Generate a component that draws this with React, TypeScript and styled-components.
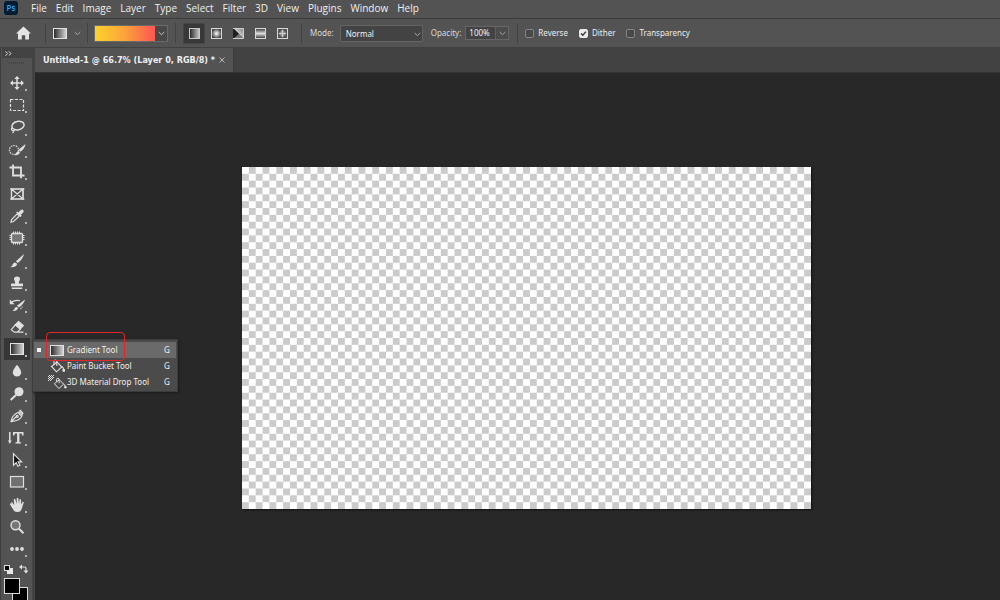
import React from 'react';
import styled, { createGlobalStyle, css } from 'styled-components';

const GlobalStyle = createGlobalStyle`
  *, *::before, *::after { box-sizing: border-box; }
  body {
    margin: 0;
    background: #282828;
    color: #dcdcdc;
    font-family: 'Noto Sans', 'Open Sans', sans-serif;
    font-size: 8px;
    line-height: 12px;
  }
  button, input, select { font: inherit; color: inherit; margin: 0; padding: 0; border: 0; background: none; }
  svg { display: block; flex: none; }
`;

const AppShell = styled.div`
  display: flex;
  flex-direction: column;
  height: 100vh;
  overflow: hidden;
`;

const MenuBar = styled.nav`
  display: flex;
  align-items: center;
  flex: none;
  height: 19px;
  padding: 0 0 2px 4px;
  gap: 13px;
  background: #535353;
  border-bottom: 1px solid #3c3c3c;
`;

const MenuList = styled.div`
  display: flex;
  gap: 9px;
`;

const MenuButton = styled.button`
  font-family: 'Open Sans', 'Noto Sans', sans-serif;
  font-size: 10px;
  line-height: 14px;
  color: #f0f0f0;
`;

const OptionsBar = styled.div`
  display: flex;
  align-items: center;
  flex: none;
  height: 29px;
  background: #535353;
  border-bottom: 1px solid #404040;
`;

const Divider = styled.div<{ $before?: number; $after?: number }>`
  width: 1px;
  height: 20px;
  margin-left: ${p => p.$before ?? 8}px;
  margin-right: ${p => p.$after ?? 8}px;
  background: #434343;
`;

const HomeButton = styled.button`
  margin-left: 16px;
`;

const ToolPreset = styled.button`
  display: flex;
  align-items: center;
  gap: 7px;
`;

const GradientPicker = styled.button`
  display: flex;
  height: 17px;
  border: 1px solid #6a6a6a;
  background: #484848;
`;

const GradientSwatch = styled.span`
  width: 60px;
  height: 100%;
  background: linear-gradient(90deg, #fdd32a, #fba33b 50%, #fc5c50 95%);
`;

const ChevronCell = styled.span`
  display: flex;
  align-items: center;
  justify-content: center;
  width: 12px;
  height: 100%;
`;

const StyleGroup = styled.div`
  display: flex;
`;

const StyleButton = styled.button<{ $active?: boolean }>`
  display: flex;
  align-items: center;
  justify-content: center;
  width: 22px;
  height: 21px;
  border: 1px solid ${p => (p.$active ? '#454545' : 'transparent')};
  background: ${p => (p.$active ? '#383838' : 'none')};
`;

const FieldLabel = styled.label`
  color: #dadada;
`;

const ModeBox = styled.div`
  position: relative;
  width: 83px;
  margin: 1px 8px 0 6px;
`;

const ModeSelect = styled.select`
  appearance: none;
  display: block;
  width: 100%;
  height: 17px;
  padding: 0 16px 0 5px;
  border: 1px solid #646464;
  border-radius: 2px;
  background: #434343;
  color: #f2f2f2;
`;

const SelectArrow = styled.span`
  position: absolute;
  right: 2px;
  top: 7px;
  pointer-events: none;
`;

const OpacityBox = styled.div`
  display: flex;
  height: 14px;
  margin-left: 4px;
  border: 1px solid #666;
  background: #434343;
`;

const OpacityInput = styled.input`
  width: 29px;
  padding-left: 3px;
  color: #f4f4f4;
`;

const ArrowButton = styled.button`
  display: flex;
  align-items: center;
  justify-content: center;
  width: 13px;
  border-left: 1px solid #606060;
  background: #4b4b4b;
`;

const CheckLabel = styled.label`
  display: flex;
  align-items: center;
  gap: 4px;
  margin-right: 11px;
  color: #ededed;
`;

const CheckBox = styled.input`
  appearance: none;
  width: 9px;
  height: 9px;
  border: 1px solid #858585;
  border-radius: 2px;
  background: #484848;
  &:checked {
    border-color: #ebebeb;
    background: #ebebeb url("data:image/svg+xml,%3Csvg xmlns='http://www.w3.org/2000/svg' viewBox='0 0 7 7'%3E%3Cpath d='M1 3.4 2.8 5.2 6 1.6' fill='none' stroke='%23333' stroke-width='1.4'/%3E%3C/svg%3E");
  }
`;

const Workspace = styled.div`
  display: flex;
  flex: 1;
  min-height: 0;
`;

const ToolPanel = styled.aside`
  display: flex;
  flex-direction: column;
  flex: none;
  width: 35px;
  padding-left: 1px;
  border-left: 1px solid #3f3f3f;
  border-right: 3px solid #434343;
  background: #535353;
`;

const CollapseButton = styled.button`
  display: flex;
  align-items: center;
  flex: none;
  width: 100%;
  height: 10px;
  padding-left: 3px;
  background: #434343;
`;

const Grip = styled.div`
  flex: none;
  width: 16px;
  height: 2px;
  margin: 4px auto 8px;
  background: repeating-linear-gradient(90deg, #454545 0 1px, #535353 1px 2px);
`;

const ToolList = styled.div`
  display: grid;
  grid-auto-rows: 1fr;
  flex: none;
  height: 488px;
`;

const ToolSlot = styled.div`
  position: relative;
  display: flex;
`;

const ToolButton = styled.button<{ $active?: boolean; $plain?: boolean }>`
  position: relative;
  display: flex;
  align-items: center;
  justify-content: center;
  width: 26px;
  margin-left: 2px;
  background: ${p => (p.$active ? '#363636' : 'none')};
  ${p => !p.$plain && css`
    &::after {
      content: '';
      position: absolute;
      right: 3px;
      bottom: 3px;
      width: 2px;
      height: 2px;
      background: #b5b5b5;
    }
  `}
`;

const ColorControls = styled.div`
  flex: none;
  padding: 4px 0 0 2px;
`;

const Flyout = styled.div`
  position: absolute;
  z-index: 2;
  left: 30px;
  top: 1px;
  width: 146px;
  padding: 2px 1px 1px;
  border: 1px solid #3c3c3c;
  background: #4b4b4b;
  box-shadow: 1px 1px 2px #1c1c1c;
`;

const FlyoutItem = styled.button<{ $current?: boolean }>`
  display: grid;
  grid-template-columns: 16px 17px 1fr 10px;
  align-items: center;
  width: 100%;
  height: 16px;
  padding-right: 2px;
  text-align: left;
  color: #f0f0f0;
  background: ${p => (p.$current ? '#6a6a6a' : 'none')};
`;

const CurrentDot = styled.span`
  width: 4px;
  height: 4px;
  margin-left: 3px;
  background: #f2f2f2;
`;

const Highlight = styled.span`
  position: absolute;
  z-index: 1;
  left: 13px;
  top: -8px;
  width: 79px;
  height: 29px;
  border: 1px solid #e0282c;
  border-radius: 4px;
  pointer-events: none;
`;

const DocumentArea = styled.main`
  display: flex;
  flex-direction: column;
  flex: 1;
  min-width: 0;
`;

const TabStrip = styled.div`
  display: flex;
  flex: none;
  height: 25px;
  background: #424242;
  border-bottom: 1px solid #333;
`;

const DocumentTab = styled.div`
  display: flex;
  align-items: center;
  gap: 4px;
  padding: 0 8px;
  background: #535353;
  border-right: 1px solid #3a3a3a;
  font-family: 'DejaVu Sans Condensed', 'Noto Sans', sans-serif;
  font-size: 9px;
  font-weight: 700;
  color: #f0f0f0;
  white-space: nowrap;
`;

const Stage = styled.div`
  display: flex;
  align-items: center;
  justify-content: center;
  flex: 1;
  min-height: 0;
  padding: 3px 0 0 18px;
  background: #282828;
`;

const TransparencyGrid = styled.svg`
  width: 569px;
  height: 342px;
  box-shadow: 1px 1px 2px #111;
`;

const Chevron = ({ color = '#a8a8a8' }: { color?: string }) => (
  <svg width="7" height="5" viewBox="0 0 7 5" fill="none" stroke={color}><path d="M.7 1l2.8 2.7L6.3 1" /></svg>
);

const GradientIcon = ({ w = 14, h = 11, id }: { w?: number; h?: number; id: string }) => (
  <svg width={w} height={h} viewBox={`0 0 ${w} ${h}`}>
    <defs><linearGradient id={id}><stop offset="0" stopColor="#262626" /><stop offset="1" stopColor="#d8d8d8" /></linearGradient></defs>
    <rect x=".5" y=".5" width={w - 1} height={h - 1} fill={`url(#${id})`} stroke="#e2e2e2" />
  </svg>
);

const Bucket = () => (
  <g stroke="#e0e0e0" fill="none" strokeWidth="1.1">
    <path d="M1.5 7.5 7 3l4.8 5-5.3 4.8z" /><path d="M6.8 7V2.2Q5 0 4 2.4v3" />
    <path d="M11.5 7.5q2 .5 2.5 4.6" />
    <circle cx="13.8" cy="11.3" r="1" fill="#e0e0e0" />
  </g>
);

const styleIcons = ['Linear', 'Radial', 'Angle', 'Reflected', 'Diamond'];

const StyleIcon = ({ kind }: { kind: string }) => (
  <svg width="11" height="11" viewBox="0 0 11 11">
    <defs>
      <linearGradient id="st-lin"><stop offset="0" stopColor="#222" /><stop offset="1" stopColor="#ccc" /></linearGradient>
      <radialGradient id="st-rad"><stop offset=".1" stopColor="#eee" /><stop offset="1" stopColor="#444" /></radialGradient>
      <linearGradient id="st-ang" x1="0" y1="1" x2="1" y2="0"><stop offset=".3" stopColor="#eee" /><stop offset="1" stopColor="#777" /></linearGradient>
      <linearGradient id="st-ref" x1="0" y1="0" x2="0" y2="1"><stop offset="0" stopColor="#333" /><stop offset=".5" stopColor="#ddd" /><stop offset="1" stopColor="#333" /></linearGradient>
    </defs>
    {kind === 'Linear' && <rect x=".5" y=".5" width="10" height="10" fill="url(#st-lin)" stroke="#c8c8c8" />}
    {kind === 'Radial' && <rect x=".5" y=".5" width="10" height="10" fill="url(#st-rad)" stroke="#d8d8d8" />}
    {kind === 'Angle' && <><path d="M0 0h11v11z" fill="url(#st-ang)" /><path d="M0 0 6 6 0 11z" fill="#1e1e1e" /><path d="M0 11 6 6l5 5z" fill="#777" /><path d="M0 .5h10.500v10H0" fill="none" stroke="#d0d0d0" /></>}
    {kind === 'Reflected' && <rect x=".5" y=".5" width="10" height="10" fill="url(#st-ref)" stroke="#d8d8d8" />}
    {kind === 'Diamond' && <><rect x=".5" y=".5" width="10" height="10" fill="#555" stroke="#d8d8d8" /><path d="M5.500 1.500l4 4-4 4-4-4z" fill="#999" /><path d="M5.500 2v7M2 5.500h7" stroke="#ccc" /></>}
  </svg>
);

const tools: { name: string; plain?: boolean; art: React.ReactNode }[] = [
  { name: 'Move', art: <><path d="M9 3.5v11M3.5 9h11" strokeWidth="1.500" /><path d="M9 2l2.700 3H6.300zM9 16l2.700-3H6.300zM2 9l3-2.700v5.400zM16 9l-3-2.700v5.400z" fill="#e0e0e0" stroke="none" /></> },
  { name: 'Marquee', art: <rect x="2.5" y="3.5" width="13" height="11" strokeDasharray="3 1.5" /> },
  { name: 'Lasso', art: <><ellipse cx="10" cy="7.6" rx="6.2" ry="4.2" transform="rotate(-12 10 7.6)" strokeWidth="1.500" /><path d="M4.5 9.5Q2.5 11 4 12.2T7 11.6M5.8 12.3q.4 1.8-1.4 2.8" /></> },
  { name: 'Quick Selection', art: <><circle cx="6" cy="9" r="4.500" strokeDasharray="1.500 1" /><path d="M17.500 3l-7 5.800 2 2Q17 7.500 17.500 3z" fill="#e0e0e0" stroke="none" /><path d="M12 11.300Q11 14.800 6.300 14.300q2-.8 2.300-3 1.800-2.200 3.400 0z" fill="#e0e0e0" stroke="none" /></> },
  { name: 'Crop', art: <path d="M5 1.5V12.5h9M1.5 4.5H13v10.8M13 12.5h3.5" strokeWidth="1.800" /> },
  { name: 'Frame', plain: true, art: <><rect x="3.5" y="4" width="11.5" height="10" /><path d="M3.5 4 15 14M15 4 3.5 14M2 4h14.5M2 14h14.5M3.5 3v12M15 3v12" /></> },
  { name: 'Eyedropper', art: <><path d="M9.2 6.8l2.2 2.2-5.900 5.500-2.500.6.6-2.600z" /><path d="M8.2 5.600l4.400 4.400 1.200-1.200-1-1 2.400-2.400q1.100-1.200 0-2.400t-2.400 0L10.400 5.400l-1-1z" fill="#e0e0e0" stroke="none" /></> },
  { name: 'Patch', art: <><rect x="3.500" y="4.500" width="11" height="9" rx="1" fill="#777" strokeWidth="1.300" /><path d="M5.500 2.500v2M7.500 2.500v2M9.500 2.500v2M11.500 2.500v2M5.500 13.500v2M7.500 13.500v2M9.500 13.500v2M11.500 13.500v2M1.500 6.500h2M1.500 8.500h2M1.500 10.500h2M14.500 6.500h2M14.500 8.500h2M14.500 10.500h2" strokeWidth="1" /></> },
  { name: 'Brush', art: <><path d="M16 2 8 9.300l1.800 1.800Q15 7 16 2z" fill="#e0e0e0" stroke="none" /><path d="M9.200 12Q7.700 15.900 2.300 15.200q2.200-1 2.500-3.200Q6.900 8.800 9.200 12z" fill="#e0e0e0" stroke="none" /></> },
  { name: 'Clone Stamp', art: <path d="M9 2.5q3 0 3 2.7c0 1.2-1.5 2.2-1.2 4.3h3.500q.7 0 .7.8v2H3v-2q0-.8.7-.8h3.500C7.500 7.400 6 6.400 6 5.200Q6 2.500 9 2.500zM3.800 13.400h10.400v1.600H3.800z" fill="#e0e0e0" stroke="none" /> },
  { name: 'History Brush', art: <><path d="M17 3.500l-8 6.300 1.700 1.700Q16 8 17 3.500zM10 12Q9.200 15.500 4.500 14.900q1.800-.8 2.200-2.700 1.500-2.300 3.300-.2z" fill="#e0e0e0" stroke="none" /><path d="M3.500 6.300q4-3 8.500-1.500" /><path d="M1.800 3.500v4.700h4.700z" fill="#e0e0e0" stroke="none" /><path d="M12.500 13 14.500 10.500" strokeDasharray="1 1" /></> },
  { name: 'Eraser', art: <><path d="M10.500 3.500l4.800 4-3 3.500-5-4.200z" fill="#e0e0e0" /><path d="M7.300 6.800l5 4.200-2.600 3H6L3.300 11.600zM6 14.200h9.500" /></> },
  { name: 'Gradient', art: null },
  { name: 'Blur', art: <path d="M9 2.700q4.200 5 4.200 7.700a4.200 4.200 0 0 1-8.400 0Q4.800 7.700 9 2.700z" fill="#e0e0e0" stroke="none" /> },
  { name: 'Dodge', art: <><circle cx="11" cy="6.800" r="4.500" fill="#e0e0e0" stroke="none" /><path d="M8 10l-5.300 5" strokeWidth="2" /></> },
  { name: 'Pen', art: <><path d="M3 14.700Q4 8 10 5.500l3.800 3.800Q11.300 14 3 14.700zL8.500 9.500M10.800 4.400l4 4" /><path d="M11 3.500l1.300-1 3.300 3.500-.8 1.500z" fill="#e0e0e0" stroke="none" /><circle cx="9.200" cy="9.300" r="1" /></> },
  { name: 'Type', art: <><path d="M1.800 3v10" strokeWidth="1.500" /><path d="M0 11.500h3.600L1.800 15z" fill="#e0e0e0" stroke="none" /><path d="M5 3h10.500v3.400h-1.300l-.6-1.800h-2.200v8.300l1.700.5v1.100H7.400v-1.100l1.700-.5V4.600H6.900l-.6 1.800H5z" fill="#e0e0e0" stroke="none" /></> },
  { name: 'Path Selection', art: <path d="M5.500 2.700v11.500l2.700-2.500 1.700 3.500 2-1-1.700-3.300h3.300z" fill="#111" /> },
  { name: 'Rectangle', art: <rect x="2.500" y="3.500" width="13" height="10.500" fill="#707070" /> },
  { name: 'Hand', art: <path d="M4 8.500 2.300 7.300Q1.500 8 2.300 9l3.500 5.500Q7 16 9.500 16q3.500 0 4.300-3.500l2-6q0-1-1.200-.8l-1.500 3V3.700q-.8-1.200-1.600 0L11 8 10.300 2.300q-.9-1-1.600 0V8L7.300 3.200q-1-1-1.600.2l.6 5.900L4.500 6.500q-1.300-.9-1.500.5z" fill="#e0e0e0" stroke="none" /> },
  { name: 'Zoom', plain: true, art: <><circle cx="7.500" cy="7.300" r="4.500" fill="#777" strokeWidth="1.400" /><path d="M11 10.800l4.500 4.500" strokeWidth="2" /></> },
  { name: 'Edit Toolbar', art: <g fill="#e0e0e0" stroke="none"><circle cx="4" cy="9" r="1.900" /><circle cx="9" cy="9" r="1.900" /><circle cx="14" cy="9" r="1.900" /></g> },
];

const menus = ['File', 'Edit', 'Image', 'Layer', 'Type', 'Select', 'Filter', '3D', 'View', 'Plugins', 'Window', 'Help'];

const GradientFlyout = () => (
  <Flyout role="menu">
    <FlyoutItem role="menuitem" $current>
      <CurrentDot /><GradientIcon id="fly-grad" /><span>Gradient Tool</span><span>G</span>
    </FlyoutItem>
    <FlyoutItem role="menuitem">
      <span /><svg width="15" height="14" viewBox="0 0 15 14"><Bucket /></svg><span>Paint Bucket Tool</span><span>G</span>
    </FlyoutItem>
    <FlyoutItem role="menuitem">
      <span />
      <svg width="17" height="15" viewBox="0 0 17 15" overflow="visible">
        <g transform="translate(3 2) scale(.9)"><Bucket /></g>
        <path d="M-1 0h1v1h-1zM1 0h1v1H1zM3 0h1v1H3zM-2 1h1v1h-1zM0 1h1v1H0zM2 1h1v1H2zM-1 2h1v1h-1zM1 2h1v1H1zM3 2h1v1H3zM-2 3h1v1h-1zM0 3h1v1H0zM2 3h1v1H2zM-1 4h1v1h-1zM1 4h1v1H1zM-2 5h1v1h-1zM0 5h1v1H0z" fill="#e0e0e0" />
      </svg>
      <span>3D Material Drop Tool</span><span>G</span>
    </FlyoutItem>
    <Highlight />
  </Flyout>
);

export default function App() {
  return (
    <AppShell>
      <GlobalStyle />
      <MenuBar aria-label="Application menu">
        <svg width="14" height="14" viewBox="0 0 14 14">
          <rect width="14" height="14" rx="3" fill="#001d34" />
          <text x="7" y="10" textAnchor="middle" fontFamily="Open Sans" fontSize="8" fontWeight="600" fill="#31a8ff">Ps</text>
        </svg>
        <MenuList>
          {menus.map(m => <MenuButton key={m}>{m}</MenuButton>)}
        </MenuList>
      </MenuBar>

      <OptionsBar>
        <HomeButton aria-label="Home">
          <svg width="15" height="14" viewBox="0 0 15 14"><path d="M7.500.5 15 7.500h-2V13.500H9.200V9.300H5.800v4.200H2V7.500H0z" fill="#e4e4e4" /></svg>
        </HomeButton>
        <Divider $before={14} $after={7} />
        <ToolPreset aria-label="Tool preset"><GradientIcon id="preset-grad" /><Chevron /></ToolPreset>
        <Divider $before={6} $after={6} />
        <GradientPicker aria-label="Edit gradient">
          <GradientSwatch /><ChevronCell><Chevron color="#c4c4c4" /></ChevronCell>
        </GradientPicker>
        <Divider $before={7} $after={7} />
        <StyleGroup>
          {styleIcons.map((s, i) => (
            <StyleButton key={s} $active={i === 0} aria-label={`${s} gradient`}><StyleIcon kind={s} /></StyleButton>
          ))}
        </StyleGroup>
        <Divider />
        <FieldLabel htmlFor="mode">Mode:</FieldLabel>
        <ModeBox>
          <ModeSelect id="mode" defaultValue="Normal"><option>Normal</option></ModeSelect>
          <SelectArrow><Chevron /></SelectArrow>
        </ModeBox>
        <FieldLabel htmlFor="opacity">Opacity:</FieldLabel>
        <OpacityBox>
          <OpacityInput id="opacity" defaultValue="100%" />
          <ArrowButton aria-label="Opacity slider"><Chevron /></ArrowButton>
        </OpacityBox>
        <Divider $after={7} />
        <CheckLabel><CheckBox type="checkbox" />Reverse</CheckLabel>
        <CheckLabel><CheckBox type="checkbox" defaultChecked />Dither</CheckLabel>
        <CheckLabel><CheckBox type="checkbox" />Transparency</CheckLabel>
      </OptionsBar>

      <Workspace>
        <ToolPanel>
          <CollapseButton aria-label="Collapse tools">
            <svg width="7" height="5" viewBox="0 0 7 5" fill="none" stroke="#ddd"><path d="M.5.3l2.200 2.200L.5 4.700M3.800.3 6 2.500 3.800 4.700" /></svg>
          </CollapseButton>
          <Grip />
          <ToolList>
            {tools.map(t => (
              <ToolSlot key={t.name}>
                <ToolButton aria-label={`${t.name} tool`} $active={t.name === 'Gradient'} $plain={t.plain}>
                  {t.art
                    ? <svg width="18" height="18" viewBox="0 0 18 18" fill="none" stroke="#e0e0e0" strokeWidth="1.200">{t.art}</svg>
                    : <GradientIcon id="tool-grad" h={12} />}
                </ToolButton>
                {t.name === 'Gradient' && <GradientFlyout />}
              </ToolSlot>
            ))}
          </ToolList>
          <ColorControls>
            <svg width="26" height="38" viewBox="0 0 26 38">
              <rect x="3" y="4" width="6" height="6" fill="#e6e6e6" />
              <rect x=".5" y="1.500" width="5" height="5" fill="#000" stroke="#ddd" />
              <path d="M17 3h3.500q1.500 0 1.500 1.500V7" fill="none" stroke="#e0e0e0" strokeWidth="1.200" />
              <path d="M18 .5v5L15 3zM19.500 6.500h5L22 9.500z" fill="#e0e0e0" />
              <rect x="8.500" y="23.500" width="15" height="15" fill="#000" stroke="#dcdcdc" />
              <rect x=".5" y="14.500" width="15" height="15" fill="#000" stroke="#dcdcdc" />
            </svg>
          </ColorControls>
        </ToolPanel>

        <DocumentArea>
          <TabStrip>
            <DocumentTab>
              <span>Untitled-1 @ 66.7% (Layer 0, RGB/8) *</span>
              <button aria-label="Close document">
                <svg width="6" height="6" viewBox="0 0 6 6" stroke="#b8b8b8"><path d="M.5.5l5 5M5.500.5l-5 5" /></svg>
              </button>
            </DocumentTab>
          </TabStrip>
          <Stage>
            <TransparencyGrid viewBox="0 0 83 50" preserveAspectRatio="none" role="img" aria-label="Empty transparent layer">
              <defs>
                <pattern id="checks" width="2" height="2" patternUnits="userSpaceOnUse">
                  <rect width="2" height="2" fill="#fff" />
                  <path d="M1 0h1v1H1zM0 1h1v1H0z" fill="#cbcbcb" />
                </pattern>
              </defs>
              <rect width="83" height="50" fill="url(#checks)" />
            </TransparencyGrid>
          </Stage>
        </DocumentArea>
      </Workspace>
    </AppShell>
  );
}
